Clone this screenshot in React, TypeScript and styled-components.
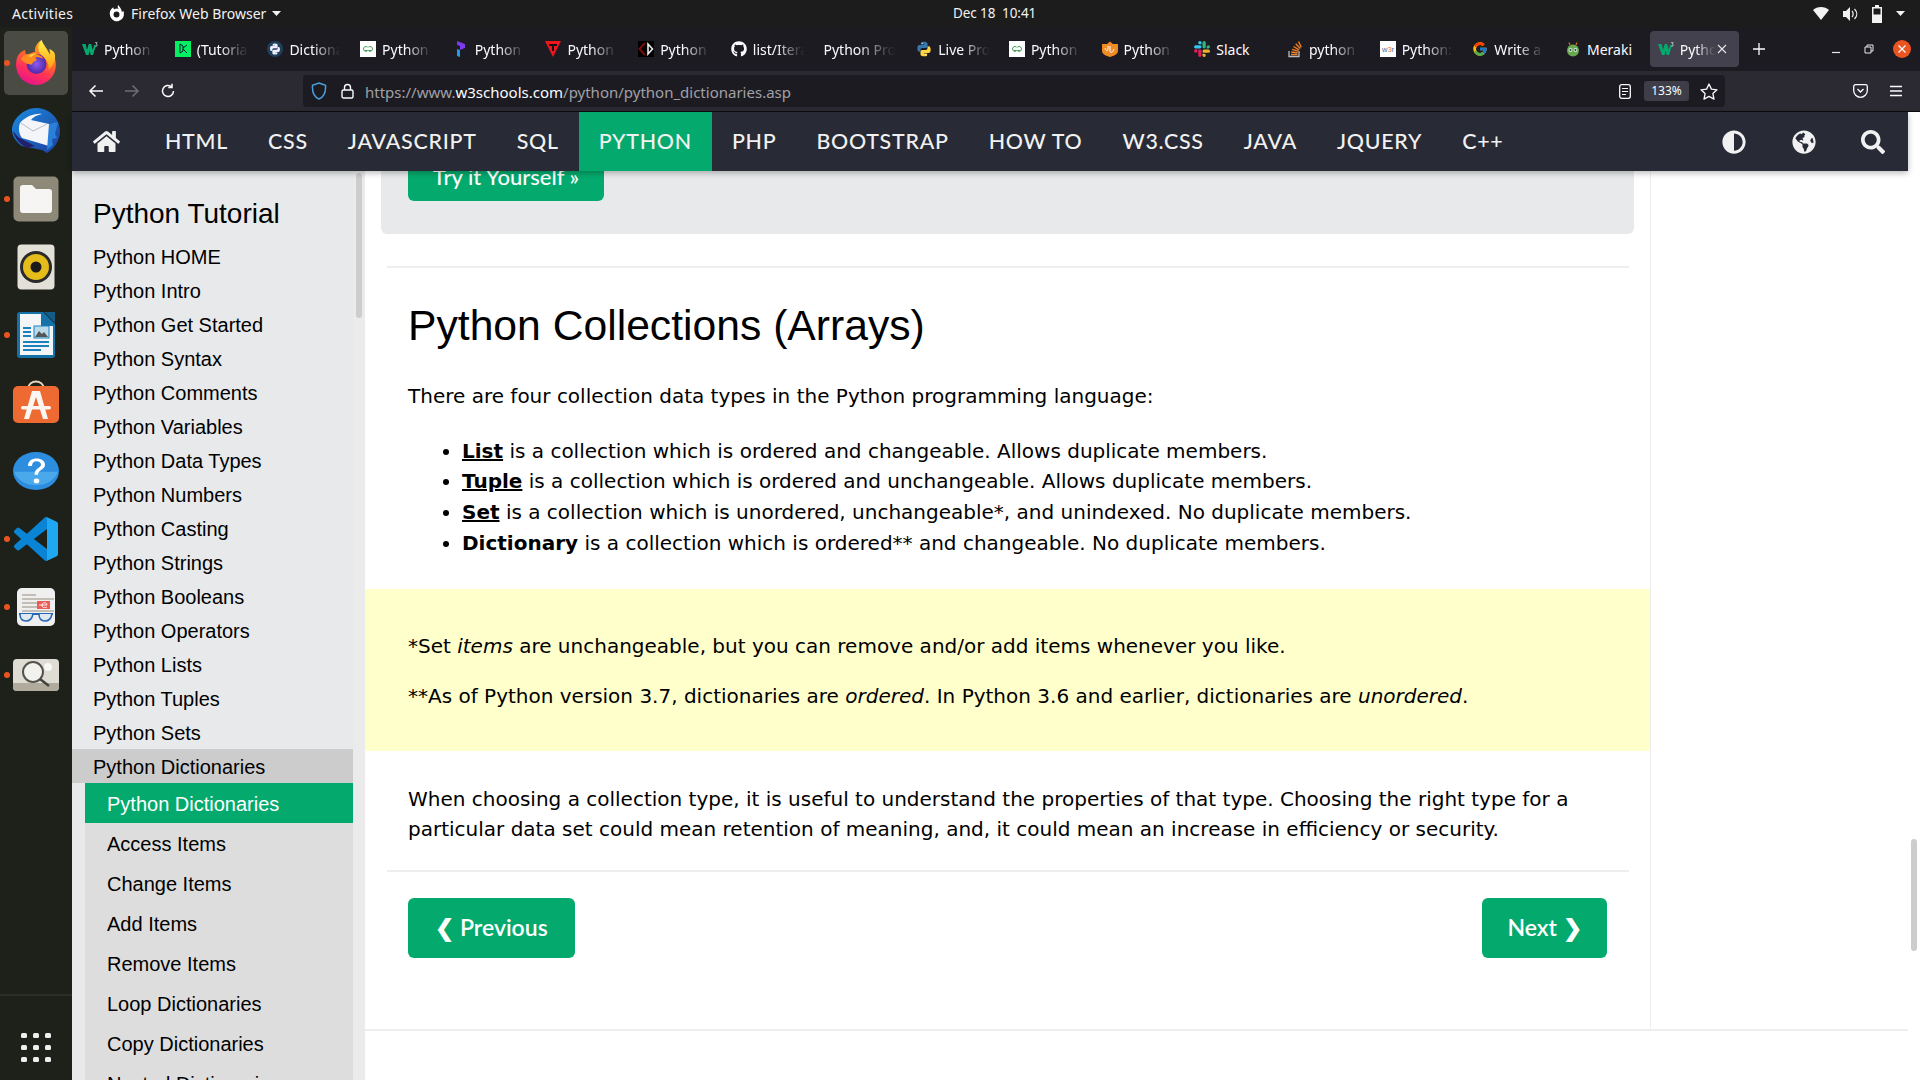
import React from "react";
import styled, { createGlobalStyle } from "styled-components";
import { FaHome, FaAdjust, FaGlobeAmericas, FaSearch, FaGithub } from "react-icons/fa";
import { FcGoogle } from "react-icons/fc";

const Global = createGlobalStyle`
  html, body { margin: 0; padding: 0; background: #fff; overflow: hidden; }
  * { box-sizing: border-box; }
`;

const CHROME = `"Noto Sans", "Open Sans", sans-serif`;
const W3 = `"Lato", "Open Sans", sans-serif`;
const ARIAL = `"Liberation Sans", Arial, sans-serif`;
const VERDANA = `"DejaVu Sans", Verdana, sans-serif`;

const Screen = styled.div`
  width: 1920px; height: 1080px; overflow: hidden;
  display: flex; flex-direction: column; background: #fff;
`;
const TopBar = styled.header`
  height: 27px; flex: none; background: #1c1c1c; color: #f2f2f2;
  display: flex; align-items: center; font: 400 14px/27px ${CHROME};
`;
const Activities = styled.span`margin-left: 12px; width: 96px; letter-spacing: 0.3px;`;
const AppMenu = styled.span`display: flex; align-items: center; gap: 6px; width: 845px; letter-spacing: 0px;`;
const Clock = styled.time`font-size: 13.5px; letter-spacing: -0.1px; white-space: pre;`;
const Status = styled.div`margin-left: auto; margin-right: 15px; display: flex; align-items: center; gap: 14px;`;
const Body = styled.div`flex: 1; min-height: 0; display: flex;`;

const Dock = styled.nav`
  width: 72px; flex: none; background: #1d2119; display: flex; flex-direction: column; padding-top: 2px;
`;
const DockItem = styled.div<{ $active?: boolean; $running?: boolean }>`
  height: 68px; flex: none; display: flex; align-items: center; justify-content: center; position: relative;
  &::before {
    content: ""; display: ${(p) => (p.$running ? "block" : "none")}; position: absolute; left: 4px; top: 31px;
    width: 6px; height: 6px; border-radius: 50%; background: #e95420; z-index: 2;
  }
`;
const DockTile = styled.div<{ $active?: boolean }>`
  width: 64px; height: 64px; border-radius: 5px; display: flex; align-items: center; justify-content: center;
  background: ${(p) => (p.$active ? "#4a4c44" : "transparent")};
`;
const DockFooter = styled.div`
  margin-top: auto; height: 86px; flex: none; border-top: 2px solid #2b2f27;
  display: flex; justify-content: center; align-items: center; padding-top: 19px;
`;
const AppsGrid = styled.div`display: grid; grid-template-columns: repeat(3, 6px); grid-auto-rows: 5px; gap: 7px 6px;`;
const AppsDot = styled.i`display: block; background: #efefef; border-radius: 1.5px;`;

const Browser = styled.div`flex: 1; min-width: 0; display: flex; flex-direction: column;`;
const TabBar = styled.div`height: 44px; flex: none; background: #1c1b22; display: flex; align-items: center;`;
const Tab = styled.div`flex: 0 0 92.7px; height: 36px; padding: 0 1px 0 2px;`;
const TabInner = styled.div<{ $active?: boolean }>`
  height: 36px; border-radius: 4px; padding-left: 8px; display: flex; align-items: center; gap: 6px; position: relative;
  background: ${(p) => (p.$active ? "#42414d" : "transparent")};
`;
const TabTitle = styled.span<{ $fade?: boolean; $wide?: boolean }>`
  font: 400 14px/22px ${CHROME}; color: #fbfbfe; white-space: nowrap; overflow: hidden; flex: none;
  width: ${(p) => (p.$wide ? 72 : 52)}px; padding-top: 1px;
  mask-image: ${(p) => (p.$fade ? "linear-gradient(to right,#000 45%,rgba(0,0,0,.2) 85%,transparent 100%)" : "none")};
`;
const ActiveTitle = styled(TabTitle)`width: 36px;`;
const CloseX = styled.span`margin-left: -6px; display: flex; align-items: center;`;
const NewTab = styled.div`width: 38px; display: flex; justify-content: center; align-items: center;`;
const WinControls = styled.div`margin-left: auto; display: flex; align-items: center; padding-right: 2px;`;
const WinBtn = styled.div`width: 33px; display: flex; justify-content: center; align-items: center;`;
const CloseCircle = styled.div`
  width: 18px; height: 18px; border-radius: 50%; background: #e95420; display: flex; justify-content: center; align-items: center;
`;

const Toolbar = styled.div`
  height: 41px; flex: none; background: #2b2a33; border-bottom: 1px solid #0c0c0d;
  display: flex; align-items: center; padding: 0 6px;
`;
const ToolBtn = styled.div`width: 36px; height: 32px; display: flex; align-items: center; justify-content: center; flex: none;`;
const UrlBar = styled.div`
  width: 1422px; height: 32px; margin-left: 117px; background: #1c1b22; border-radius: 4px; flex: none;
  display: flex; align-items: center; padding: 0 7px;
`;
const UrlIcon = styled.span`display: flex; align-items: center; justify-content: center; width: 18px; flex: none;`;
const LockSlot = styled(UrlIcon)`margin-left: 10px;`;
const UrlText = styled.span`margin-left: 9px; padding-top: 1px; font: 400 15px/22px ${CHROME}; color: #a0a0a6; white-space: nowrap;`;
const UrlHost = styled.span`color: #fbfbfe;`;
const UrlEnd = styled.div`margin-left: auto; display: flex; align-items: center;`;
const ZoomChip = styled.span`
  width: 45px; height: 20px; margin: 0 11px 0 13px; border-radius: 3px; background: #3f3e48; color: #fbfbfe;
  font: 400 12px/20px ${CHROME}; text-align: center;
`;
const ToolEnd = styled.div`margin-left: auto; display: flex;`;

const NavBar = styled.nav`
  height: 59px; flex: none; margin-right: 12px; background: #282a35; color: #f1f1f1;
  display: flex; align-items: stretch; position: relative; z-index: 3;
  box-shadow: 0 2px 6px rgba(0,0,0,.28);
`;
const HomeItem = styled.div`width: 73px; display: flex; align-items: center; padding-left: 21px; font-size: 24px;`;
const NavItem = styled.a<{ $active?: boolean }>`
  display: flex; align-items: center; padding: 1px 20px 0; white-space: nowrap;
  font: 500 21.4px/1 ${W3}; letter-spacing: 0.75px;
  color: #f1f1f1; background: ${(p) => (p.$active ? "#04aa6d" : "transparent")};
`;
const NavEnd = styled.div`margin-left: auto; display: flex; align-items: center; padding-right: 0;`;
const NavIcon = styled.span`width: 69.5px; display: flex; justify-content: center; font-size: 24px; color: #f1f1f1;`;

const Page = styled.div`flex: 1; min-height: 0; display: flex; background: #fff;`;
const Sidebar = styled.aside`width: 293px; flex: none; display: flex; overflow: hidden;`;
const SideList = styled.div`width: 281px; flex: none; background: #e7e9eb; height: 2000px;`;
const SideTrack = styled.div`width: 12px; flex: none; background: #ebebec; padding: 2px 3px 0;`;
const SideThumb = styled.div`height: 145px; background: #cdcdcd; border-radius: 3px;`;
const SideTitle = styled.h3`
  margin: 0; height: 68px; padding: 19px 0 0 21px; font: 400 28px/48px ${ARIAL}; color: #000;
`;
const SideRow = styled.div<{ $open?: boolean }>`
  height: 34px; padding-left: 21px; font: 400 20px/36px ${ARIAL}; color: #000;
  background: ${(p) => (p.$open ? "#cccccc" : "transparent")};
`;
const SubList = styled.div`margin-left: 13px; background: #dddddd;`;
const SubRow = styled.div<{ $active?: boolean }>`
  height: 40px; padding-left: 22px; font: 400 20px/42px ${ARIAL};
  color: ${(p) => (p.$active ? "#fff" : "#000")};
  background: ${(p) => (p.$active ? "#04aa6d" : "transparent")};
`;

const Content = styled.div`flex: 1; min-width: 0;`;
const ContentRow = styled.div`height: 860px; display: flex; border-bottom: 2px solid #eeeeee;`;
const Main = styled.main`
  width: 1286px; flex: none; border-right: 1px solid #eeeeee; font: 400 20px/30.67px ${VERDANA}; color: #000;
`;
const TryBox = styled.div`
  height: 63px; margin: 0 16px 0 16px; padding-left: 27px; background: #e7e9eb; border-radius: 0 0 6px 6px; overflow: hidden;
`;
const TryBtn = styled.a`
  display: block; width: 196px; height: 46px; margin-top: -16px; background: #04aa6d; color: #fff; border-radius: 6px;
  font: 500 22px/44px ${W3}; text-align: center;
`;
const Rule = styled.hr<{ $top: number }>`
  border: 0; height: 2px; background: #eeeeee; margin: ${(p) => p.$top}px 21px 0 22px;
`;
const Title = styled.h2`margin: 29px 0 0 43px; font: 400 42.67px/56px ${ARIAL}; color: #000;`;
const Para = styled.p<{ $top?: number }>`margin: ${(p) => p.$top ?? 0}px 43px 0; `;
const Bullets = styled.ul`margin: 24px 43px 0; padding-left: 54px; list-style: disc;`;
const Strong = styled.b`font-weight: 700;`;
const LinkStrong = styled.a`font-weight: 700; color: #000; text-decoration: underline;`;
const Note = styled.div`
  margin-top: 31px; height: 162px; background: #ffffcc; padding: 41.5px 43px;
  display: flex; flex-direction: column; gap: 19px;
`;
const NoteLine = styled.p`margin: 0;`;
const Pager = styled.div`margin-top: 26px; padding: 0 43px; display: flex; justify-content: space-between;`;
const PagerBtn = styled.a<{ $w: number }>`
  width: ${(p) => p.$w}px; height: 60px; background: #04aa6d; color: #fff; border-radius: 6px;
  font: 600 23px/58px ${W3}; text-align: center;
`;
const RightCol = styled.div`flex: 1;`;
const PageTrack = styled.div`width: 12px; flex: none; padding: 668px 3px 0 3px;`;
const PageThumb = styled.div`height: 112px; width: 6px; background: #cdcdcd; border-radius: 3px;`;

/* ---------- drawings ---------- */
const W3Icon = () => (
  <svg width="16" height="14" viewBox="0 0 16 14">
    <path d="M0 2h3.6l1.4 6 1.7-6h2.4l1.7 6 1.2-5 2 .2L11 13H8.6L7.8 8.6 6.6 13H4z" fill="#04aa6d" />
    <path d="M13 .6h2.2L14 2l1.2.6-.4 1.6h-1.6" fill="none" stroke="#dfe" strokeWidth=".6" />
  </svg>
);
const DcIcon = () => (
  <svg width="16" height="16" viewBox="0 0 16 16">
    <rect width="16" height="16" fill="#03ef62" />
    <path d="M5 3v9l3-2V5zM8 7l4-3M8 8l4 4" fill="none" stroke="#05192d" strokeWidth="1" />
  </svg>
);
const PyPaths = ({ a, b }: { a: string; b: string }) => (
  <>
    <path d="M11.9 1C7 1 7.3 3.1 7.3 3.1v2.2H12V6H5.4S2 5.6 2 10.9 4.9 16 4.9 16h1.8v-2.5s-.1-2.9 2.9-2.9h4.9s2.8 0 2.8-2.7V3.7S17 1 11.9 1z" fill={a} />
    <circle cx="9.2" cy="3.5" r=".9" fill="#fff" />
    <g transform="rotate(180 12 12)">
      <path d="M11.9 1C7 1 7.3 3.1 7.3 3.1v2.2H12V6H5.4S2 5.6 2 10.9 4.9 16 4.9 16h1.8v-2.5s-.1-2.9 2.9-2.9h4.9s2.8 0 2.8-2.7V3.7S17 1 11.9 1z" fill={b} />
      <circle cx="9.2" cy="3.5" r=".9" fill="#fff" />
    </g>
  </>
);
const PyDarkIcon = () => (
  <svg width="16" height="16" viewBox="0 0 24 24">
    <circle cx="12" cy="12" r="12" fill="#1f3f5b" />
    <g transform="translate(3 3) scale(.75)"><PyPaths a="#eef" b="#eef" /></g>
  </svg>
);
const PyIcon = () => <svg width="16" height="16" viewBox="0 0 24 24"><PyPaths a="#3776ab" b="#ffd343" /></svg>;
const GfgIcon = () => (
  <svg width="16" height="16" viewBox="0 0 16 16">
    <rect width="16" height="16" fill="#fff" />
    <path d="M7.6 6.2A2.4 2.4 0 1 0 7.6 9.6H4.6M8.4 6.2a2.4 2.4 0 1 1 0 3.4h3" fill="none" stroke="#2f8d46" strokeWidth=".9" />
  </svg>
);
const PrefectIcon = () => (
  <svg width="16" height="16" viewBox="0 0 16 16">
    <path d="M4 0l8 3v4L7 9V5L4 4z" fill="#7c3aed" />
    <path d="M4 8l3 1v7l-3-1z" fill="#1e9bf0" />
  </svg>
);
const TIcon = () => (
  <svg width="16" height="16" viewBox="0 0 16 16">
    <path d="M0 0h16L8 16z" fill="#f0141e" />
    <path d="M4 3h8v2H9v5H7V5H4z" fill="#111" />
  </svg>
);
const CodeIcon = () => (
  <svg width="16" height="16" viewBox="0 0 16 16">
    <rect width="16" height="16" fill="#000" />
    <path d="M7 2L1.500 8 7 14" fill="none" stroke="#7a0c0c" strokeWidth="2" />
    <path d="M10 3l4.500 5-4.500 5z" fill="none" stroke="#eee" strokeWidth="1.600" />
  </svg>
);
const OrangeShield = () => (
  <svg width="16" height="16" viewBox="0 0 16 16">
    <path d="M5 3l3-2.500L11 3h5v7c0 3-4 5-8 6-4-1-8-3-8-6V3z" fill="#f08a24" />
    <path d="M3 7c1 4 3 3 3 1V5M8 5v5c0 2 3 2 4-2" fill="none" stroke="#fff" strokeWidth="1" />
  </svg>
);
const SlackIcon = () => (
  <svg width="16" height="16" viewBox="0 0 24 24">
    <path d="M5 15a2.500 2.500 0 1 1-2.500-2.500H5zM6.300 15a2.500 2.500 0 0 1 5 0v6.500a2.500 2.500 0 0 1-5 0z" fill="#e01e5a" />
    <path d="M8.800 5a2.500 2.500 0 1 1 2.500-2.500V5zM8.800 6.300a2.500 2.500 0 0 1 0 5H2.500a2.500 2.500 0 0 1 0-5z" fill="#36c5f0" />
    <path d="M19 8.800a2.500 2.500 0 1 1 2.500 2.500H19zM17.700 8.800a2.500 2.500 0 0 1-5 0V2.500a2.500 2.500 0 0 1 5 0z" fill="#2eb67d" />
    <path d="M15.200 19a2.500 2.500 0 1 1-2.500 2.500V19zM15.200 17.700a2.500 2.500 0 0 1 0-5h6.300a2.500 2.500 0 0 1 0 5z" fill="#ecb22e" />
  </svg>
);
const SoIcon = () => (
  <svg width="16" height="18" viewBox="0 0 16 18">
    <path d="M2 11v5.500h10V11" fill="none" stroke="#bcbbbb" strokeWidth="1.300" />
    <path d="M4 14.500h6.500M4.200 12l6.400.8M5 9.400l6.200 1.800M6.500 6.500l5.600 3.300M8.700 3.800l4.600 4.600M11.500 1.500l2.800 5.800" stroke="#f48024" strokeWidth="1.400" fill="none" />
  </svg>
);
const W3rIcon = () => (
  <svg width="16" height="16" viewBox="0 0 16 16">
    <rect width="16" height="16" fill="#fff" />
    <text x="8" y="11" textAnchor="middle" fontSize="7.500" fontFamily="Liberation Sans" fill="#3a6ea5">w<tspan fill="#e8772e">3</tspan>r</text>
  </svg>
);
const MerakiIcon = () => (
  <svg width="16" height="16" viewBox="0 0 16 16">
    <circle cx="8" cy="9.500" r="6" fill="#6aa84f" />
    <circle cx="5.500" cy="9" r="2" fill="#cfe8d8" /><circle cx="10.500" cy="9" r="2" fill="#cfe8d8" />
    <circle cx="5.500" cy="9" r=".9" fill="#234" /><circle cx="10.500" cy="9" r=".9" fill="#234" />
    <path d="M5 4L4 1.500M11 4l1-2.500" stroke="#d2691e" strokeWidth="1.300" />
  </svg>
);
const FirefoxLogo = ({ size = 48 }: { size?: number }) => (
  <svg width={size} height={size} viewBox="0 0 48 48">
    <defs>
      <linearGradient id="ffb" x1="0.7" y1="0" x2="0.3" y2="1">
        <stop offset="0" stopColor="#ffb81f" /><stop offset=".4" stopColor="#ff6a2b" />
        <stop offset=".7" stopColor="#ff2f5c" /><stop offset="1" stopColor="#e3138c" />
      </linearGradient>
      <linearGradient id="ffy" x1="0.5" y1="0" x2="0.5" y2="1">
        <stop offset="0" stopColor="#fff44f" /><stop offset="1" stopColor="#ff9a0e" />
      </linearGradient>
      <radialGradient id="ffp"><stop offset="0" stopColor="#8a5cf0" /><stop offset="1" stopColor="#4f27a8" /></radialGradient>
    </defs>
    <path d="M43 20c-1-4-3-7-6-10 1 3 1 4.500.5 6C35 9 31 6 29.500 1c-5 3-7 8-6.500 12-3 0-6 2-7 4-2-1-3-4-3-6C8 13 6 16 5 19 1 32 10 46 24.500 46 37 46 47 33 43 20z" fill="url(#ffb)" />
    <path d="M29.500 1c-4 5-4 10-1 14 5 4 9 9 8 16 5-4 8-11 6-17-1-2-3-3-5-4 1 3 1 4.500.5 6C35 9 31 6 29.500 1z" fill="url(#ffy)" />
    <circle cx="24.500" cy="25" r="10" fill="url(#ffp)" />
    <path d="M9 20c2-4 7-6 12-5 5 0 9 2 11 5-3-1.500-6-2-9-1.500 1 1 2 2 1.500 3-3 1-4 2-4.500 4-3 0-7.500-1-11-5.500z" fill="#ff8a1f" />
    <path d="M16 17c3-2 6-3 9-2-3 .5-5 2-6 3z" fill="#ffd23f" />
  </svg>
);
const TbLogo = () => (
  <svg width="48" height="48" viewBox="0 0 48 48">
    <defs><linearGradient id="tb" x1="0" y1="0" x2="1" y2="1"><stop offset="0" stopColor="#1a8be0" /><stop offset="1" stopColor="#1e3f9d" /></linearGradient></defs>
    <path d="M24 1c13 0 24 10 24 23 0 10-6 18-13 22l-5-3-20-4C4 35 0 29 0 23 0 12 12 1 24 1z" fill="url(#tb)" />
    <path d="M6 30l-5-6c2 8 7 13 14 17l8-2z" fill="#241f6b" />
    <path d="M8 16c5-6 14-10 22-9-5 1-9 3-11 6l18 4v22L10 31C7 27 6 21 8 16z" fill="#f4f5f9" />
    <path d="M9 16l12 8 14-7" fill="none" stroke="#b8bcc8" strokeWidth="1" />
    <path d="M37 17l9-2-3 12 2 4-5 1 1 6-6 5z" fill="#2a7fd8" />
  </svg>
);
const FilesLogo = () => (
  <svg width="46" height="46" viewBox="0 0 46 46">
    <rect x="0.500" y="0.500" width="45" height="45" rx="5" fill="#8e8878" />
    <path d="M7 12a3 3 0 0 1 3-3h9l4 4h13a3 3 0 0 1 3 3v18a3 3 0 0 1-3 3H10a3 3 0 0 1-3-3z" fill="#f6f5f3" />
  </svg>
);
const RhythmLogo = () => (
  <svg width="38" height="46" viewBox="0 0 38 46">
    <rect x="0.500" y="0.500" width="37" height="45" rx="4" fill="#e3e0d8" />
    <circle cx="19" cy="23" r="16" fill="#2a2a2a" />
    <circle cx="19" cy="23" r="13" fill="#e5bd1a" />
    <circle cx="19" cy="23" r="5.500" fill="#1b1b1b" />
  </svg>
);
const WriterLogo = () => (
  <svg width="38" height="46" viewBox="0 0 38 46">
    <path d="M3 0h23l12 12v31a3 3 0 0 1-3 3H3a3 3 0 0 1-3-3V3a3 3 0 0 1 3-3z" fill="#1572a8" />
    <path d="M3 2h21v12h12v29H3z" fill="#f4f5f6" />
    <path d="M27 0l11 0v11z" fill="#115c88" />
    <path d="M6 16h8M6 20h8M6 24h8M6 30h26M6 34h26M6 38h18" stroke="#1a83bd" strokeWidth="2" />
    <rect x="17" y="14" width="15" height="12" fill="#bcd9ea" stroke="#1a83bd" strokeWidth="1" />
    <path d="M18 25l4-6 3 3 2-2 4 5z" fill="#555" />
  </svg>
);
const StoreLogo = () => (
  <svg width="46" height="48" viewBox="0 0 46 48">
    <path d="M15 10c1-10 15-10 16 0" fill="none" stroke="#e8d3b8" strokeWidth="2" />
    <rect x="0" y="7" width="46" height="37" rx="5" fill="#ed6a32" />
    <path d="M19 12h8l8 28h-5l-7-22-7 22h-5z" fill="#fbf6f2" />
    <rect x="8" y="27" width="30" height="3.500" rx="1.700" fill="#fbf6f2" />
  </svg>
);
const HelpLogo = () => (
  <svg width="46" height="38" viewBox="0 0 46 46" preserveAspectRatio="none">
    <circle cx="23" cy="23" r="23" fill="#2d8ee0" />
    <path d="M1 24h44a23 23 0 0 1-44 0z" fill="#4aa9ea" />
    <path d="M15 17c0-6 4-9 8.500-9 5 0 8.500 3 8.500 7.500 0 6-7 6-7 12h-3.500c0-8 6.500-8 6.500-12 0-2.500-2-4.200-4.500-4.200-3 0-4.500 2-4.500 5.700z" fill="#fff" />
    <circle cx="23.500" cy="35" r="2.800" fill="#fff" />
  </svg>
);
const VsLogo = () => (
  <svg width="44" height="44" viewBox="0 0 24 24">
    <path d="M23.150 2.587L18.210.21a1.494 1.494 0 0 0-1.705.29l-9.460 8.630-4.120-3.128a.999.999 0 0 0-1.276.057L.327 7.261A1 1 0 0 0 .326 8.740L3.899 12 .326 15.260a1 1 0 0 0 .001 1.479L1.650 17.940a.999.999 0 0 0 1.276.057l4.120-3.128 9.460 8.630a1.492 1.492 0 0 0 1.704.29l4.942-2.377A1.500 1.500 0 0 0 24 20.060V3.939a1.500 1.500 0 0 0-.850-1.352zm-5.146 14.861L10.826 12l7.178-5.448v10.896z" fill="#0a84d4" />
    <path d="M18 .1l5.150 2.487A1.500 1.500 0 0 1 24 3.939V20.060a1.500 1.500 0 0 1-.850 1.360L18 23.900z" fill="#1fa8f1" />
  </svg>
);
const ReaderLogo = () => (
  <svg width="38" height="38" viewBox="0 0 38 38">
    <rect width="38" height="38" rx="5" fill="#efefef" />
    <path d="M5 7h14M5 11h32M5 15h16M5 19h16M5 23h32" stroke="#b5b0a5" strokeWidth="1.500" />
    <rect x="20" y="13" width="13" height="8" fill="#ee5a55" />
    <path d="M22 17h8c0-3-5-3-5 0s3 3 5 2" fill="none" stroke="#fff" strokeWidth=".9" />
    <path d="M2 26h34" stroke="#2767b8" strokeWidth="2" />
    <path d="M3 26c0 5 2 7 6 7s6-2 7-7M22 26c0 5 2 7 6 7s6-2 7-7" fill="#dfe7ef" stroke="#2767b8" strokeWidth="1.500" />
  </svg>
);
const LoupeLogo = () => (
  <svg width="46" height="32" viewBox="0 0 46 32">
    <rect width="46" height="32" rx="4" fill="#dedcd3" />
    <path d="M0 24h46v4a4 4 0 0 1-4 4H4a4 4 0 0 1-4-4z" fill="#b0ab9d" />
    <circle cx="35" cy="8" r="4" fill="#f7f7f5" />
    <circle cx="20" cy="13" r="10" fill="#f1f1ee" stroke="#55534e" strokeWidth="2" />
    <path d="M27 20l9 7" stroke="#45433f" strokeWidth="2.500" />
  </svg>
);
const SmallFox = () => (
  <svg width="17" height="17" viewBox="0 0 16 16">
    <path d="M9.500 0c-1 2 0 3 1 4-1-1-3-1-4.500 0C5.500 3.500 5 3 5 2 2 4 1 7 2 10c1 4 5 6 8 5 4-1 6-5 4.500-9.500-.5 1-1 1-1.500 1C13 4 11 2 9.500 0z" fill="#fff" />
    <circle cx="8" cy="9" r="2.800" fill="#1c1c1c" />
  </svg>
);
const Caret = ({ c = "#f2f2f2" }: { c?: string }) => (
  <svg width="9" height="5" viewBox="0 0 9 5"><path d="M0 0h9L4.500 5z" fill={c} /></svg>
);
const Line = ({ d, w = 16, h = 16, c = "#fbfbfe", sw = 1.500 }: { d: string; w?: number; h?: number; c?: string; sw?: number }) => (
  <svg width={w} height={h} viewBox={`0 0 ${w} ${h}`}><path d={d} fill="none" stroke={c} strokeWidth={sw} /></svg>
);

const tabs: { icon: React.ReactNode; text: string; fade?: boolean; wide?: boolean }[] = [
  { icon: <W3Icon />, text: "Python Dictionaries", fade: true },
  { icon: <DcIcon />, text: "(Tutorial) Python", fade: true },
  { icon: <PyDarkIcon />, text: "Dictionaries in", fade: true },
  { icon: <GfgIcon />, text: "Python Dictionary", fade: true },
  { icon: <PrefectIcon />, text: "Python Tutorial", fade: true },
  { icon: <TIcon />, text: "Python Tutorial", fade: true },
  { icon: <CodeIcon />, text: "Python Course", fade: true },
  { icon: <FaGithub size={16} color="#fbfbfe" />, text: "list/Iterators", fade: true },
  { icon: null, text: "Python Programs", fade: true, wide: true },
  { icon: <PyIcon />, text: "Live Programming", fade: true },
  { icon: <GfgIcon />, text: "Python Strings", fade: true },
  { icon: <OrangeShield />, text: "Python Basics", fade: true },
  { icon: <SlackIcon />, text: "Slack" },
  { icon: <SoIcon />, text: "python list", fade: true },
  { icon: <W3rIcon />, text: "Python: Learn", fade: true },
  { icon: <FcGoogle size={16} />, text: "Write a program", fade: true },
  { icon: <MerakiIcon />, text: "Meraki" },
];
const side = ["Python HOME", "Python Intro", "Python Get Started", "Python Syntax", "Python Comments", "Python Variables", "Python Data Types", "Python Numbers", "Python Casting", "Python Strings", "Python Booleans", "Python Operators", "Python Lists", "Python Tuples", "Python Sets"];
const subs = ["Access Items", "Change Items", "Add Items", "Remove Items", "Loop Dictionaries", "Copy Dictionaries", "Nested Dictionaries"];
const navs = ["HTML", "CSS", "JAVASCRIPT", "SQL", "PYTHON", "PHP", "BOOTSTRAP", "HOW TO", "W3.CSS", "JAVA", "JQUERY", "C++"];
const dock: { el: React.ReactNode; run?: boolean; active?: boolean }[] = [
  { el: <FirefoxLogo />, run: true, active: true },
  { el: <TbLogo /> },
  { el: <FilesLogo />, run: true },
  { el: <RhythmLogo /> },
  { el: <WriterLogo />, run: true },
  { el: <StoreLogo /> },
  { el: <HelpLogo /> },
  { el: <VsLogo />, run: true },
  { el: <ReaderLogo />, run: true },
  { el: <LoupeLogo />, run: true },
];

export default function App() {
  return (
    <Screen>
      <Global />
      <TopBar>
        <Activities>Activities</Activities>
        <AppMenu><SmallFox />Firefox Web Browser <Caret /></AppMenu>
        <Clock>Dec 18  10:41</Clock>
        <Status>
          <svg width="16" height="13" viewBox="0 0 16 13"><path d="M0 3c4-4 12-4 16 0L8 13z" fill="#f2f2f2" /></svg>
          <svg width="15" height="14" viewBox="0 0 15 14"><path d="M0 4h3l4-4v14l-4-4H0z" fill="#f2f2f2" /><path d="M9 4c1.500 1.500 1.500 4.500 0 6M11.500 2c3 3 3 7 0 10" fill="none" stroke="#f2f2f2" strokeWidth="1.200" /></svg>
          <svg width="10" height="18" viewBox="0 0 10 18"><path d="M3 0h4v2h3v16H0V2h3z" fill="#f2f2f2" /><rect x="1.500" y="3.500" width="7" height="6" fill="#1c1c1c" /></svg>
          <Caret />
        </Status>
      </TopBar>
      <Body>
        <Dock>
          {dock.map((d, i) => (
            <DockItem key={i} $running={d.run}>
              <DockTile $active={d.active}>{d.el}</DockTile>
            </DockItem>
          ))}
          <DockFooter>
            <AppsGrid>{Array.from({ length: 9 }, (_, i) => <AppsDot key={i} />)}</AppsGrid>
          </DockFooter>
        </Dock>
        <Browser>
          <TabBar>
            {tabs.map((t, i) => (
              <Tab key={i}>
                <TabInner>{t.icon}<TabTitle $fade={t.fade} $wide={t.wide}>{t.text}</TabTitle></TabInner>
              </Tab>
            ))}
            <Tab>
              <TabInner $active>
                <W3Icon /><ActiveTitle $fade>Python Dictionaries</ActiveTitle>
                <CloseX><Line w={12} h={12} d="M2 2l8 8M10 2l-8 8" c="#e8e8ea" sw={1.100} /></CloseX>
              </TabInner>
            </Tab>
            <NewTab><Line w={14} h={14} d="M7 1v12M1 7h12" sw={1.300} /></NewTab>
            <WinControls>
              <WinBtn><Line w={10} h={10} d="M1 8.500h8" sw={1.200} c="#e8e8e8" /></WinBtn>
              <WinBtn><Line w={10} h={10} d="M3 3V1h6v6H7M1 3h6v6H1z" sw={1} c="#e8e8e8" /></WinBtn>
              <WinBtn><CloseCircle><Line w={10} h={10} d="M1.500 1.500l7 7M8.500 1.500l-7 7" sw={1.300} /></CloseCircle></WinBtn>
            </WinControls>
          </TabBar>
          <Toolbar>
            <ToolBtn><Line d="M15 8H2M7.500 2.500L2 8l5.500 5.500" /></ToolBtn>
            <ToolBtn><Line d="M1 8h13M8.500 2.500L14 8l-5.500 5.500" c="#6e6d75" /></ToolBtn>
            <ToolBtn><Line d="M13.500 8a5.500 5.500 0 1 1-1.800-4.100M12 0.800V4.500H8.300" /></ToolBtn>
            <UrlBar>
              <UrlIcon><svg width="16" height="18" viewBox="0 0 16 18"><path d="M8 1l6.500 2.200C15 10 12.500 15 8 17 3.500 15 1 10 1.500 3.200z" fill="none" stroke="#4a9fe0" strokeWidth="1.500" /></svg></UrlIcon>
              <LockSlot><svg width="13" height="16" viewBox="0 0 13 16"><path d="M3.500 7V4.500a3 3 0 0 1 6 0V7" fill="none" stroke="#fbfbfe" strokeWidth="1.400" /><rect x="1" y="7" width="11" height="8" rx="1.500" fill="none" stroke="#fbfbfe" strokeWidth="1.400" /></svg></LockSlot>
              <UrlText>https://www.<UrlHost>w3schools.com</UrlHost>/python/python_dictionaries.asp</UrlText>
              <UrlEnd>
                <svg width="12" height="15" viewBox="0 0 12 15"><rect x=".7" y=".7" width="10.600" height="13.600" rx="2" fill="none" stroke="#fbfbfe" strokeWidth="1.300" /><path d="M3 4.500h6M3 7.500h6M3 10.500h4" stroke="#fbfbfe" strokeWidth="1.200" /></svg>
                <ZoomChip>133%</ZoomChip>
                <svg width="18" height="17" viewBox="0 0 18 17"><path d="M9 1l2.400 5.100 5.600.7-4.100 3.800 1.100 5.500L9 13.400l-5 2.700 1.100-5.500L1 6.800l5.600-.7z" fill="none" stroke="#fbfbfe" strokeWidth="1.300" strokeLinejoin="round" /></svg>
              </UrlEnd>
            </UrlBar>
            <ToolEnd>
              <ToolBtn><svg width="15" height="14" viewBox="0 0 15 14"><path d="M2.500.7h10a1.800 1.800 0 0 1 1.800 1.800v4a6.800 6.800 0 0 1-13.600 0v-4A1.800 1.800 0 0 1 2.500.7z" fill="none" stroke="#fbfbfe" strokeWidth="1.300" /><path d="M4.500 5l3 3 3-3" fill="none" stroke="#fbfbfe" strokeWidth="1.400" /></svg></ToolBtn>
              <ToolBtn><Line w={14} h={12} d="M1 1.500h12M1 6h12M1 10.500h12" sw={1.300} /></ToolBtn>
            </ToolEnd>
          </Toolbar>
          <NavBar>
            <HomeItem><FaHome size={27} /></HomeItem>
            {navs.map((n) => <NavItem key={n} $active={n === "PYTHON"}>{n}</NavItem>)}
            <NavEnd>
              <NavIcon><FaAdjust /></NavIcon>
              <NavIcon><FaGlobeAmericas /></NavIcon>
              <NavIcon><FaSearch /></NavIcon>
            </NavEnd>
          </NavBar>
          <Page>
            <Sidebar>
              <SideList>
                <SideTitle>Python Tutorial</SideTitle>
                {side.map((s) => <SideRow key={s}>{s}</SideRow>)}
                <SideRow $open>Python Dictionaries</SideRow>
                <SubList>
                  <SubRow $active>Python Dictionaries</SubRow>
                  {subs.map((s) => <SubRow key={s}>{s}</SubRow>)}
                </SubList>
              </SideList>
              <SideTrack><SideThumb /></SideTrack>
            </Sidebar>
            <Content>
              <ContentRow>
                <Main>
                  <TryBox><TryBtn>Try it Yourself »</TryBtn></TryBox>
                  <Rule $top={32} />
                  <Title>Python Collections (Arrays)</Title>
                  <Para $top={28}>There are four collection data types in the Python programming language:</Para>
                  <Bullets>
                    <li><LinkStrong>List</LinkStrong> is a collection which is ordered and changeable. Allows duplicate members.</li>
                    <li><LinkStrong>Tuple</LinkStrong> is a collection which is ordered and unchangeable. Allows duplicate members.</li>
                    <li><LinkStrong>Set</LinkStrong> is a collection which is unordered, unchangeable*, and unindexed. No duplicate members.</li>
                    <li><Strong>Dictionary</Strong> is a collection which is ordered** and changeable. No duplicate members.</li>
                  </Bullets>
                  <Note>
                    <NoteLine>*Set <i>items</i> are unchangeable, but you can remove and/or add items whenever you like.</NoteLine>
                    <NoteLine>**As of Python version 3.7, dictionaries are <i>ordered</i>. In Python 3.6 and earlier, dictionaries are <i>unordered</i>.</NoteLine>
                  </Note>
                  <Para $top={32.4}>When choosing a collection type, it is useful to understand the properties of that type. Choosing the right type for a particular data set could mean retention of meaning, and, it could mean an increase in efficiency or security.</Para>
                  <Rule $top={24.6} />
                  <Pager>
                    <PagerBtn $w={167}>❮ Previous</PagerBtn>
                    <PagerBtn $w={125}>Next ❯</PagerBtn>
                  </Pager>
                </Main>
                <RightCol />
              </ContentRow>
            </Content>
            <PageTrack><PageThumb /></PageTrack>
          </Page>
        </Browser>
      </Body>
    </Screen>
  );
}
